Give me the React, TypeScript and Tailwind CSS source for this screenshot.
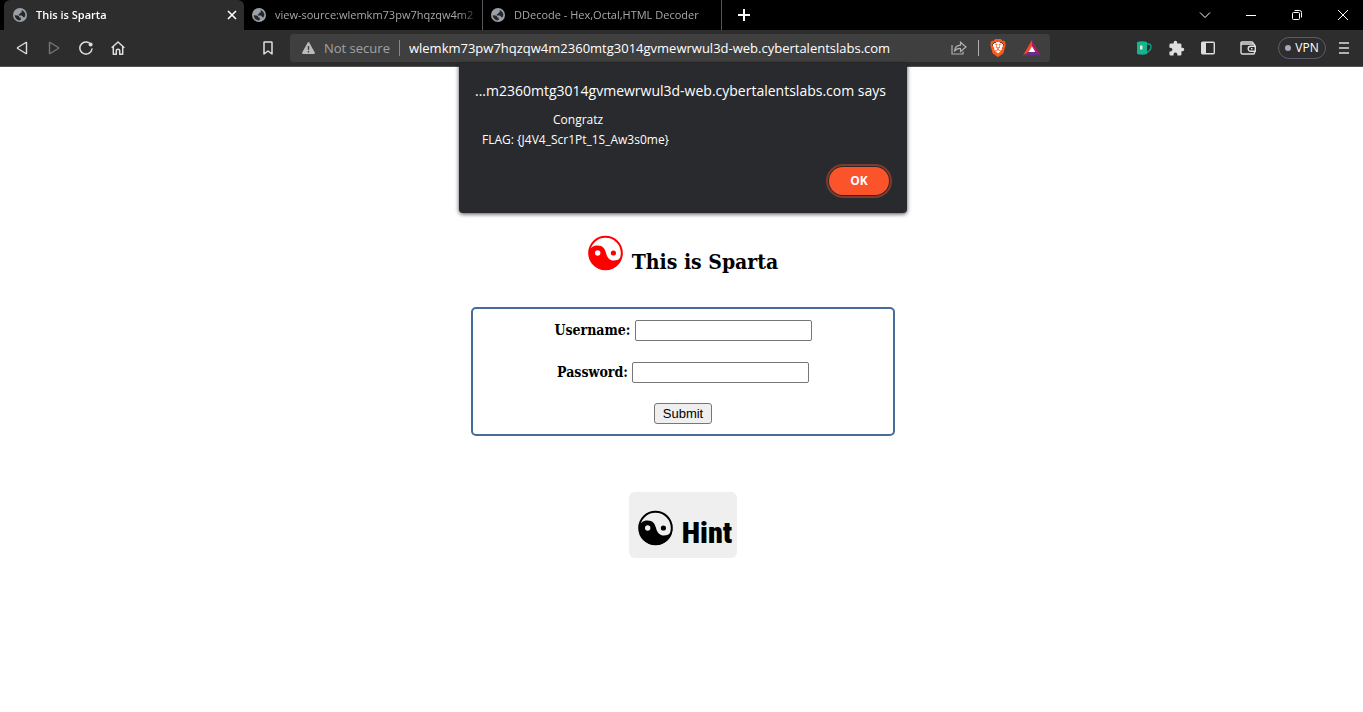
import type { ReactNode } from "react";
import { SiBrave } from "react-icons/si";
import { MdExtension } from "react-icons/md";

const ui = "font-['Open_Sans','Noto_Sans',sans-serif]";

function Globe() {
  return (
    <svg width="14" height="14" viewBox="0 0 14 14" className="shrink-0" aria-hidden="true">
      <circle cx="7" cy="7" r="7" fill="#9aa0a6" />
      <path d="M1.6 7.2 4.5 7.6Q6.3 7.9 6.2 9.2L7.8 9.7V11.6Q7.8 12.3 6.8 12.4Q2.2 11.8 1.6 7.2ZM8.5 1.9Q11.8 3 12.4 6.5 12.3 8.6 11.2 9.4L10 8.9Q9.8 7.6 8.5 7.5H5.8V6.2Q7.4 6.3 7.4 4.8L8.9 4.3Z" fill="#25272a" />
    </svg>
  );
}

function YinYang() {
  return (
    <svg width="36" height="36" viewBox="0 0 36 36" className="shrink-0" aria-hidden="true">
      <circle cx="17.5" cy="18" r="16.3" fill="none" stroke="currentColor" strokeWidth="2" />
      <path
        fillRule="evenodd"
        d="M1 18C1.5 13 5 10.5 9.5 10.5C15 10.500 17 14 18 18C19.5 23.5 22 25.500 26 25.500C31 25.500 34 22 34.500 18A16.750 17 0 0 1 1 18ZM7 18a2.700 2.700 0 1 0 5.400 0a2.700 2.700 0 1 0-5.400 0Z"
        fill="currentColor"
      />
      <circle cx="25.4" cy="18" r="2.6" fill="currentColor" />
    </svg>
  );
}

function Tab({ title, active = false }: { title: string; active?: boolean }) {
  return (
    <div
      className={
        active
          ? "flex w-60 items-center gap-[9px] rounded-t-md bg-[#2d2d2d] px-[9px] font-semibold text-white"
          : "flex w-[239px] items-center gap-[9px] border-r border-[#55565a] pl-2 text-[#a6a8ab]"
      }
    >
      <Globe />
      <span className="min-w-0 flex-1 overflow-hidden whitespace-nowrap mask-[linear-gradient(to_right,black_88%,transparent)]">
        {title}
      </span>
      {active && (
        <button aria-label="Close tab" className="-mr-[5px] grid size-4 place-items-center">
          <svg width="10" height="10" viewBox="0 0 10 10" stroke="white" strokeWidth="1.6"><path d="m1 1 8 8M9 1 1 9" /></svg>
        </button>
      )}
    </div>
  );
}

function IconButton({ label, children }: { label: string; children: ReactNode }) {
  return (
    <button aria-label={label} className="grid h-7 w-8 shrink-0 place-items-center text-[#dedede]">
      {children}
    </button>
  );
}

function WindowButton({ label, d }: { label: string; d: string }) {
  return (
    <button aria-label={label} className="grid w-[46px] place-items-center">
      <svg width="12" height="12" viewBox="0 0 12 12" fill="none" stroke="white" strokeWidth="1"><path d={d} /></svg>
    </button>
  );
}

function TabStrip() {
  return (
    <div className="flex h-[30px] overflow-hidden bg-black pl-1 text-[11px] leading-4">
      <Tab title="This is Sparta" active />
      <Tab title="view-source:wlemkm73pw7hqzqw4m2" />
      <Tab title="DDecode - Hex,Octal,HTML Decoder" />
      <button aria-label="New tab" className="grid w-11 place-items-center">
        <svg width="12" height="12" viewBox="0 0 12 12" stroke="white" strokeWidth="2"><path d="M6 0v12M0 6h12" /></svg>
      </button>
      <div className="-mr-[3px] ml-auto flex shrink-0">
        <WindowButton label="Search tabs" d="m1 3.5 5 5 5-5" />
        <WindowButton label="Minimize" d="M1 6.5h10" />
        <WindowButton label="Restore" d="M2.5 3.5h5a1 1 0 0 1 1 1v5a1 1 0 0 1-1 1h-5a1 1 0 0 1-1-1v-5a1 1 0 0 1 1-1ZM3.5 1.5h5a2 2 0 0 1 2 2v5" />
        <WindowButton label="Close" d="m1 1 10 10M11 1 1 11" />
      </div>
    </div>
  );
}

function Toolbar() {
  return (
    <div className="flex h-[37px] items-center border-b border-[#555152] bg-[#2d2d2d] pl-1.5">
      <IconButton label="Back">
        <svg width="14" height="14" viewBox="0 0 14 14" fill="none" stroke="currentColor" strokeWidth="1.4" strokeLinejoin="round"><path d="M11.500 1.800v10.400q0 .6-.6.3L2.700 7.500q-.6-.5 0-1L10.900 1.500q.6-.3.6.3Z" /></svg>
      </IconButton>
      <IconButton label="Forward">
        <svg width="14" height="14" viewBox="0 0 14 14" fill="none" stroke="#777" strokeWidth="1.4" strokeLinejoin="round"><path d="M2.500 1.800v10.400q0 .6.6.3l8.200-5q.6-.5 0-1L3.100 1.500Q2.500 1.200 2.500 1.800Z" /></svg>
      </IconButton>
      <IconButton label="Reload">
        <svg width="14" height="14" viewBox="0 0 14 14" fill="none" stroke="currentColor" strokeWidth="1.5" strokeLinecap="round"><path d="M10 1.7A6.1 6.1 0 1 0 13 8" /><circle cx="11.6" cy="3.4" r="2" fill="currentColor" stroke="none" /></svg>
      </IconButton>
      <IconButton label="Home">
        <svg width="14" height="14" viewBox="0 0 14 14" fill="none" stroke="currentColor" strokeWidth="1.5" strokeLinejoin="round"><path d="M.7 6.8 7 1l6.3 5.8M2.3 5.8v7.4h3V9.5q0-1.3 1.7-1.3t1.7 1.3v3.7h3V5.8" /></svg>
      </IconButton>
      <div className="ml-[118px] mr-1.5 flex">
        <IconButton label="Bookmark this page">
          <svg width="10" height="14" viewBox="0 0 10 14" fill="none" stroke="currentColor" strokeWidth="1.5" strokeLinejoin="round"><path d="M1 1.5q0-.6.6-.6h6.8q.6 0 .6.6V13L5 10 1 13Z" /></svg>
        </IconButton>
      </div>
      <div className="flex h-7 min-w-0 flex-1 items-center rounded bg-[#3f3f3f] pl-3 pr-0.5 text-[13px] leading-5">
        <svg width="13" height="12" viewBox="0 0 13 12" className="shrink-0" aria-hidden="true"><path d="M5.8.5q.7-.9 1.4 0l5.6 10q.4 1.3-.8 1.5H1Q-.2 11.8.2 10.500Z" fill="#b9bcbf" /><path d="M6.500 4v4M6.500 9v1.500" stroke="#3f3f3f" strokeWidth="1.4" /></svg>
        <span className="ml-[9px] shrink-0 text-[#a0a3a7]">Not secure</span>
        <span className="mx-[9px] h-4 w-px shrink-0 bg-[#85878a]" />
        <input
          aria-label="Address"
          readOnly
          value="wlemkm73pw7hqzqw4m2360mtg3014gvmewrwul3d-web.cybertalentslabs.com"
          className="min-w-0 flex-1 bg-transparent text-white outline-none"
        />
        <IconButton label="Share">
          <svg width="16" height="14" viewBox="0 0 16 14" fill="none" stroke="#b0b0b0" strokeWidth="1.2"><path d="M1 4v9h11v-2.500M3.300 10.500Q4 4.300 9.500 4.200V1.200L15 6 9.500 10.500V7.500Q5.500 7.200 3.300 10.500Z" /></svg>
        </IconButton>
        <span className="mx-[3px] h-4 w-px shrink-0 bg-[#b0b0b0]" />
        <IconButton label="Brave Shields">
          <span className="grid size-[18px] place-items-center bg-[radial-gradient(circle,white_45%,transparent_46%)]">
            <SiBrave size={18} color="#fb5a1c" />
          </span>
        </IconButton>
        <span className="ml-0.5 flex">
          <IconButton label="Brave Rewards">
            <svg width="18" height="16" viewBox="0 0 18 16"><path d="M9 0 0 15.500 5.800 12 9 6.500Z" fill="#ff4724" /><path d="M9 0 18 15.500 12.200 12 9 6.500Z" fill="#9e1f63" /><path d="M0 15.500h18L12.200 12H5.800Z" fill="#662d91" /><path d="M9 6.200 12.400 12H5.600Z" fill="white" /></svg>
          </IconButton>
        </span>
      </div>
      <div className="ml-[78px] flex shrink-0 items-center pr-[3px]">
        <IconButton label="Coffee">
          <svg width="15" height="14" viewBox="0 0 15 14"><path d="M9 3h2.500Q14 3 14 6t-3 5H9" fill="none" stroke="#179c83" strokeWidth="1.3" /><path d="M0 1q5-1.500 10 0v12q-5 1.500-10 0Z" fill="#14b394" /><path d="M3 4.500h2.500v4H3Z" fill="#e8efb9" /></svg>
        </IconButton>
        <IconButton label="Extensions"><MdExtension size={17} /></IconButton>
        <IconButton label="Sidebar">
          <svg width="14" height="14" viewBox="0 0 14 14" fill="none" stroke="currentColor" strokeWidth="1.400"><rect x=".7" y="1.200" width="12.600" height="11.600" rx="1" /><path d="M1 1.500h4v11H1Z" fill="currentColor" stroke="none" /></svg>
        </IconButton>
        <span className="ml-2 flex">
          <IconButton label="Wallet">
            <svg width="16" height="14" viewBox="0 0 16 14" fill="none" stroke="currentColor" strokeWidth="1.400"><path d="M14.500 5V4q0-1-1-1H1V2q0-1 1-1h10q1 0 1 1v1M1 2.500v9q0 1.500 1.500 1.500h11q1 0 1-1v-1M15.300 5.300h-4.600a2.500 2.500 0 0 0 0 5h4.600ZM11 7.800h1.500" /></svg>
          </IconButton>
        </span>
        <button className="ml-3.5 mr-0.5 flex h-[22px] w-12 items-center justify-center gap-1 rounded-full border border-[#5c5b70] text-[12px] leading-4 text-white">
          <span className="size-1.5 rounded-full bg-[#a7a8bb]" />VPN
        </button>
        <IconButton label="Menu">
          <svg width="10" height="12" viewBox="0 0 10 12" stroke="currentColor" strokeWidth="1.500"><path d="M0 1h10M0 6h10M0 11h10" /></svg>
        </IconButton>
      </div>
    </div>
  );
}

function AlertDialog() {
  return (
    <div className="absolute -top-1 left-[3px] right-0 flex justify-center">
      <div role="alertdialog" aria-label="Page message" className="w-[448px] rounded-b-sm bg-[#292a2d] px-4 pb-[18px] pt-[17px] text-white shadow-[0_1px_4px_rgba(0,0,0,0.7)]">
        <h2 className="whitespace-nowrap text-[14px] leading-[22px]">...m2360mtg3014gvmewrwul3d-web.cybertalentslabs.com says</h2>
        <div className="mt-2 text-[12px] leading-5">
          <p className="pl-[78px]">Congratz</p>
          <p className="pl-[7px]">FLAG: {"{J4V4_Scr1Pt_1S_Aw3s0me}"}</p>
        </div>
        <div className="mt-[17px] flex justify-end pr-0.5">
          <button className="h-7 w-15 rounded-full bg-[#fb542b] text-[12px] font-bold leading-4 outline-2 outline-offset-1 outline-[#81392c]">OK</button>
        </div>
      </div>
    </div>
  );
}

function Field({ label, id, type }: { label: string; id: string; type: string }) {
  return (
    <div className="flex h-[21px] items-start justify-center gap-1">
      <label htmlFor={id} className="font-['DejaVu_Serif_Condensed','DejaVu_Serif',serif] text-[14px] font-bold leading-[21px]">{label}</label>
      <input id={id} type={type} className="h-[21px] w-[177px] rounded-xs border border-[#767676] bg-white px-0.5 text-[13px]" />
    </div>
  );
}

export default function App() {
  return (
    <div className={`flex min-h-screen flex-col bg-white text-black ${ui}`}>
      <header>
        <TabStrip />
        <Toolbar />
      </header>
      <main className="relative flex flex-1 flex-col items-center pl-[3px] pt-[168px]">
        <AlertDialog />
        <div className="flex gap-2">
          <span className="text-[#f00]"><YinYang /></span>
          <h1 className="pt-[13px] font-['DejaVu_Serif_Condensed','DejaVu_Serif',serif] text-[21px] font-bold leading-7">This is Sparta</h1>
        </div>
        <form onSubmit={(e) => e.preventDefault()} className="mt-[31px] flex w-[424px] flex-col items-center gap-[21px] rounded-[5px] border-2 border-[#476c99] px-4 pb-2.5 pt-[11px]">
          <Field label="Username:" id="username" type="text" />
          <Field label="Password:" id="password" type="password" />
          <button type="submit" className="-mt-px h-[21px] rounded-[3px] border border-[#767676] bg-[#efefef] px-2 font-['Liberation_Sans',sans-serif] text-[13px] leading-[15px]">Submit</button>
        </form>
        <button className="mt-14 flex h-[66px] w-[108px] items-start justify-center gap-2 rounded-md bg-[#efefef] pl-1 pt-[18px]">
          <YinYang />
          <span className="pt-[5px] font-['Roboto_Condensed','Roboto',sans-serif] text-[30px] font-black leading-9">Hint</span>
        </button>
      </main>
    </div>
  );
}
